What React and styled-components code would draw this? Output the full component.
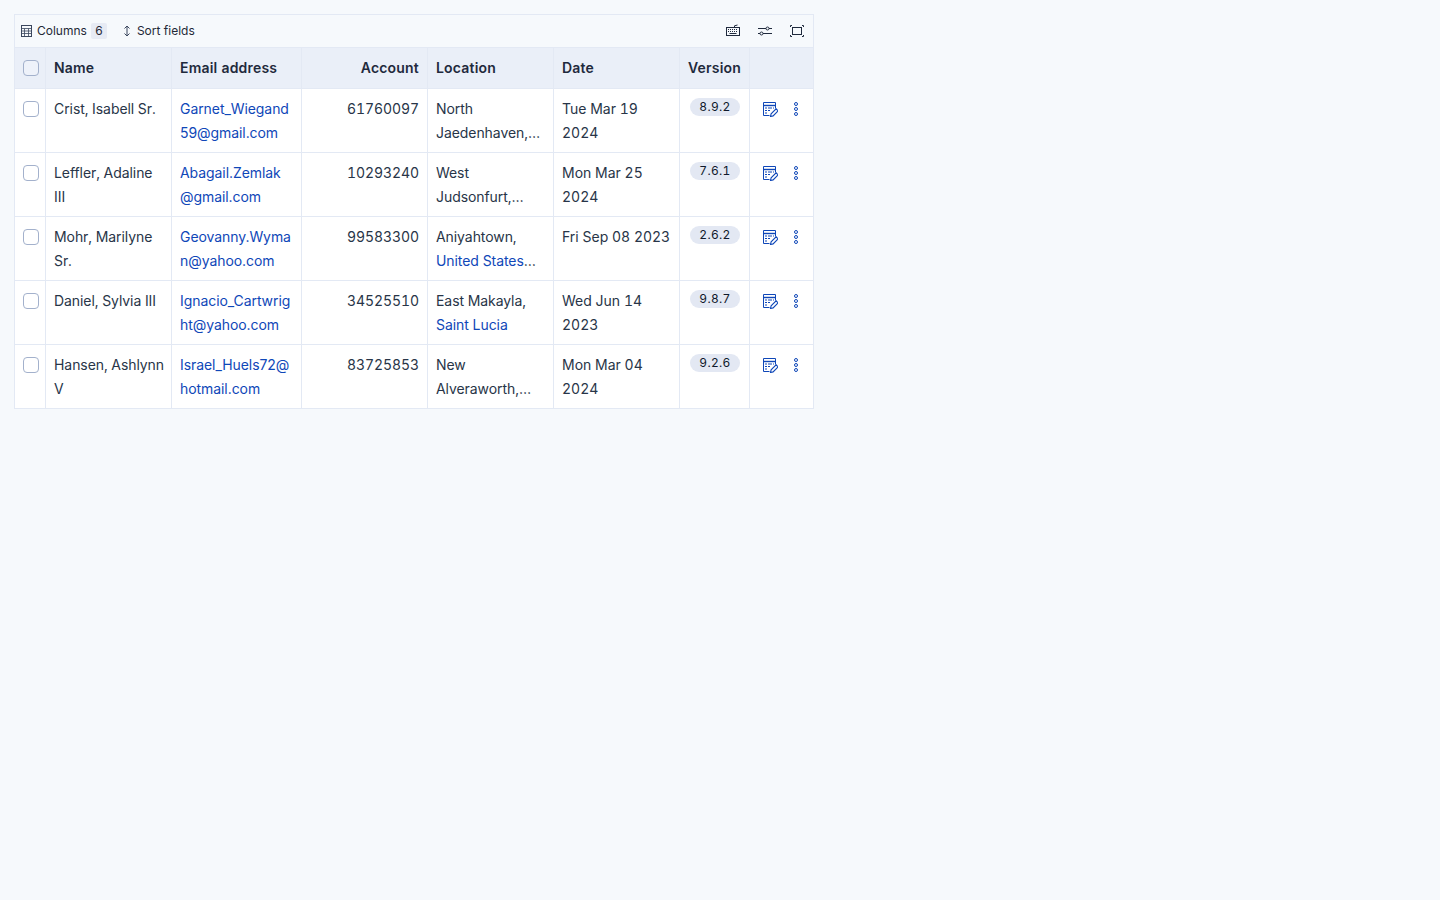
import React from 'react'
import styled, { createGlobalStyle } from 'styled-components'

const GlobalStyle = createGlobalStyle`
html, body {
  margin: 0;
  padding: 0;
  background-color: #f6f9fc;
  font-family: Inter, "Noto Sans", sans-serif;
  font-variant-numeric: tabular-nums;
  color: #1f2937;
}
`

const Page = styled.div`
  padding: 14px;
  min-height: 872px;
`

const Wrapper = styled.div`
  width: 798px;
  border: 1px solid #e3e9f4;
  background-color: #fff;
`

const Toolbar = styled.div`
  display: flex;
  align-items: center;
  justify-content: space-between;
  height: 32px;
  background-color: #f6f9fc;
  padding: 0 8px 0 6px;
  border-bottom: 1px solid #e3e9f4;
`

const ToolGroup = styled.div`
  display: flex;
  align-items: center;
`

const ToolButton = styled.button`
  display: flex;
  align-items: center;
  gap: 4px;
  padding: 0;
  margin-right: ${p => p.$gap || 0}px;
  border: none;
  background: none;
  font-family: inherit;
  font-size: 12px;
  line-height: 16px;
  color: #1f2937;
`

const Count = styled.span`
  display: inline-block;
  min-width: 16px;
  height: 16px;
  border-radius: 2px;
  background-color: #e7ebf4;
  text-align: center;
  font-size: 12px;
  line-height: 16px;
`

const IconButton = styled.button`
  display: flex;
  width: 16px;
  height: 16px;
  padding: 0;
  margin-left: 16px;
  border: none;
  background: none;
  color: #1f2a3d;
`

const Table = styled.table`
  width: 798px;
  table-layout: fixed;
  border-collapse: separate;
  border-spacing: 0;
  font-size: 14px;
  line-height: 24px;
`

const HeadCell = styled.th`
  box-sizing: border-box;
  height: 41px;
  padding: 0 8px;
  background-color: #eaeff8;
  border-bottom: 1px solid #e3e9f4;
  border-right: ${p => (p.$last ? 'none' : '1px solid #e3e9f4')};
  text-align: ${p => (p.$right ? 'right' : 'left')};
  font-weight: 600;
  letter-spacing: 0.2px;
  color: #1f2a3d;
  white-space: nowrap;
`

const Cell = styled.td`
  box-sizing: border-box;
  height: ${p => (p.$bottom ? 63 : 64)}px;
  padding: 8px 8px 7px;
  vertical-align: top;
  background-color: #fff;
  border-bottom: ${p => (p.$bottom ? 'none' : '1px solid #e3e9f4')};
  border-right: ${p => (p.$last ? 'none' : '1px solid #e3e9f4')};
  text-align: ${p => (p.$right ? 'right' : 'left')};
  letter-spacing: -0.07px;
  color: #283548;
  overflow-wrap: anywhere;
`

const NameCell = styled(Cell)`
  padding-right: 6px;
`

const DateCell = styled(Cell)`
  letter-spacing: 0;
`

const CheckCell = styled(Cell)`
  padding: 12px 0 0 8px;
`

const CheckHead = styled(HeadCell)`
  padding: 0 0 0 8px;
`

const Check = styled.span`
  display: block;
  box-sizing: border-box;
  width: 16px;
  height: 16px;
  border: 1px solid #a3b1cc;
  border-radius: 4px;
  background-color: ${p => (p.$head ? '#eef2fa' : '#fff')};
`

const MailLink = styled.a`
  color: #0f47b8;
  font-variant-numeric: normal;
  text-decoration: none;
`

const Clamp = styled.div`
  display: -webkit-box;
  -webkit-box-orient: vertical;
  -webkit-line-clamp: 2;
  overflow: hidden;
`

const Badge = styled.span`
  display: block;
  height: 18px;
  margin-top: 1px;
  border-radius: 9px;
  background-color: #e3e8f3;
  text-align: center;
  font-size: 12px;
  line-height: 18px;
  font-weight: 400;
  letter-spacing: 0.3px;
  color: #101a2c;
`

const VersionCell = styled(Cell)`
  padding: 8px 9px 0 10px;
  line-height: 18px;
`

const Actions = styled.div`
  display: flex;
  align-items: center;
  height: 24px;
  margin-left: 4px;
  gap: 10px;
  color: #0f47b8;
`

const Svg = styled.svg`
  display: block;
  flex: none;
  fill: none;
  stroke: currentColor;
  stroke-width: 1;
`

const ColumnsIcon = () => (
  <Svg width="12" height="12" viewBox="0 0 12 12" style={{ color: '#3b475e' }}>
    <rect x="0.5" y="0.5" width="10" height="11" />
    <path d="M0.5 3.5h10M0.5 6h10M0.5 8.500h10M3.500 3.500v8M7.500 3.500v8" strokeOpacity="0.8" />
  </Svg>
)

const SortIcon = () => (
  <Svg width="12" height="12" viewBox="0 0 12 12" style={{ color: '#3b475e' }}>
    <path d="M6 1v10M3.500 3.500L6 1l2.500 2.500M3.500 8.500L6 11l2.500-2.500" />
  </Svg>
)

const KeyboardIcon = () => (
  <Svg width="16" height="16" viewBox="0 0 16 16">
    <rect x="1.5" y="4.500" width="13" height="8" />
    <path d="M9.500 4.500V2.800L12.500 2" />
    <path d="M3 6.500h10M3 8.500h10" strokeDasharray="1 1" />
    <path d="M4.500 10.500h7" />
  </Svg>
)

const SlidersIcon = () => (
  <Svg width="16" height="16" viewBox="0 0 16 16">
    <path d="M1 5.500h8M12 5.500h3M1 10.500h2M6 10.500h9" />
    <circle cx="10.500" cy="5.500" r="1.500" />
    <circle cx="4.500" cy="10.500" r="1.500" />
  </Svg>
)

const ExpandIcon = () => (
  <Svg width="16" height="16" viewBox="0 0 16 16">
    <rect x="3.500" y="4.500" width="9" height="7" />
    <path d="M1.500 4V2.500H3M13 2.500h1.500V4M14.500 12v1.500H13M3 13.500H1.500V12" />
  </Svg>
)

const EditIcon = () => (
  <Svg width="16" height="16" viewBox="0 0 16 16">
    <path d="M7.500 14.500H1.500v-13h12v6" />
    <path d="M1.500 4.500h12" strokeWidth="1.400" />
    <path d="M3 7h2M6 7h4M11 7h1M3 9.500h2M6 9.500h2M3 12h2" />
    <path d="M8.500 15.500l.6-2.600 5-5 2 2-5 5z" strokeWidth="1.100" />
  </Svg>
)

const DotsIcon = () => (
  <Svg width="16" height="16" viewBox="0 0 16 16">
    <circle cx="8" cy="3" r="1.500" />
    <circle cx="8" cy="8" r="1.500" />
    <circle cx="8" cy="13" r="1.500" />
  </Svg>
)

const rows = [
  { name: 'Crist, Isabell Sr.', email: 'Garnet_Wiegand59@gmail.com', account: '61760097', city: 'North Jaedenhaven,', country: 'Cyprus Republic of', date: 'Tue Mar 19 2024', version: '8.9.2' },
  { name: 'Leffler, Adaline III', email: 'Abagail.Zemlak@gmail.com', account: '10293240', city: 'West Judsonfurt,', country: 'Kazakhstan Republic', date: 'Mon Mar 25 2024', version: '7.6.1' },
  { name: 'Mohr, Marilyne Sr.', email: 'Geovanny.Wyman@yahoo.com', account: '99583300', city: 'Aniyahtown,', country: 'United States\u200BMinor Outlying Islands', date: 'Fri Sep 08 2023', version: '2.6.2' },
  { name: 'Daniel, Sylvia III', email: 'Ignacio_Cartwright@yahoo.com', account: '34525510', city: 'East Makayla,', country: 'Saint Lucia', date: 'Wed Jun 14 2023', version: '9.8.7' },
  { name: 'Hansen, Ashlynn V', email: 'Israel_Huels72@hotmail.com', account: '83725853', city: 'New Alveraworth,', country: 'Guinea-Bissau Republic', date: 'Mon Mar 04 2024', version: '9.2.6' },
]

const widths = [31, 126, 130, 126, 126, 126, 70, 63]

const App = () => {
  return (
    <Page>
      <GlobalStyle />
      <Wrapper>
        <Toolbar>
          <ToolGroup>
            <ToolButton $gap={14}>
              <ColumnsIcon />
              Columns
              <Count>6</Count>
            </ToolButton>
            <ToolButton>
              <SortIcon />
              Sort fields
            </ToolButton>
          </ToolGroup>
          <ToolGroup>
            <IconButton><KeyboardIcon /></IconButton>
            <IconButton><SlidersIcon /></IconButton>
            <IconButton><ExpandIcon /></IconButton>
          </ToolGroup>
        </Toolbar>
        <Table>
          <colgroup>
            {widths.map((w, i) => <col key={i} style={{ width: w }} />)}
          </colgroup>
          <thead>
            <tr>
              <CheckHead><Check $head /></CheckHead>
              <HeadCell>Name</HeadCell>
              <HeadCell>Email address</HeadCell>
              <HeadCell $right>Account</HeadCell>
              <HeadCell>Location</HeadCell>
              <HeadCell>Date</HeadCell>
              <HeadCell>Version</HeadCell>
              <HeadCell $last />
            </tr>
          </thead>
          <tbody>
            {rows.map((row, i) => {
              const bottom = i === rows.length - 1
              return (
                <tr key={row.account}>
                  <CheckCell $bottom={bottom}><Check /></CheckCell>
                  <NameCell $bottom={bottom}>{row.name}</NameCell>
                  <Cell $bottom={bottom}><MailLink href="#">{row.email}</MailLink></Cell>
                  <Cell $bottom={bottom} $right>{row.account}</Cell>
                  <Cell $bottom={bottom}>
                    <Clamp>{row.city} <MailLink href="#">{row.country}</MailLink></Clamp>
                  </Cell>
                  <DateCell $bottom={bottom}>{row.date}</DateCell>
                  <VersionCell $bottom={bottom}><Badge>{row.version}</Badge></VersionCell>
                  <Cell $bottom={bottom} $last>
                    <Actions>
                      <EditIcon />
                      <DotsIcon />
                    </Actions>
                  </Cell>
                </tr>
              )
            })}
          </tbody>
        </Table>
      </Wrapper>
    </Page>
  )
}

export default App
